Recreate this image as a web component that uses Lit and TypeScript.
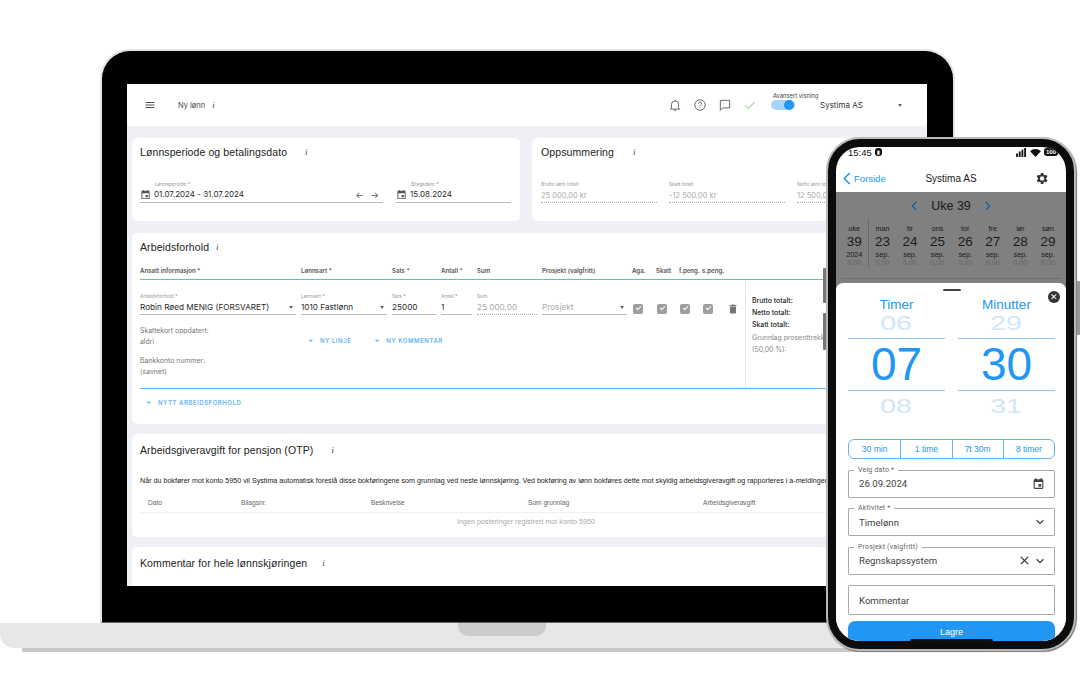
import { LitElement, html, css } from "lit";
import { customElement } from "lit/decorators.js";

const ic = (d: string, cls = "") => html`<svg class="ic ${cls}" viewBox="0 0 24 24"><path d="${d}"></path></svg>`;
const CAL = "M19 4h-1V2h-2v2H8V2H6v2H5a2 2 0 0 0-2 2v14a2 2 0 0 0 2 2h14a2 2 0 0 0 2-2V6a2 2 0 0 0-2-2zm0 16H5V9h14v11zM12 13h5v5h-5z";
const info = html`<i class="info">i</i>`;
const plus = html`<span class="plus">+</span>`;

@customElement("app-root")
export class AppRoot extends LitElement {
  static styles = css`
    :host { display: block; width: 1080px; height: 700px; position: relative; overflow: hidden; background: #fff; font-family: Inter, "Liberation Sans", sans-serif; color: #2b2b2b; }
    .laptop { position: absolute; left: 100px; top: 49px; width: 855px; height: 574px; box-sizing: border-box; background: #000; border: 2px solid #e4e4e4; border-bottom: 1px solid #666; border-radius: 30px 30px 0 0; padding: 33px 26px 36px 25px; }
    .base { position: absolute; left: 0; top: 623px; width: 1000px; height: 25px; background: #e7e7e7; border-radius: 0 0 0 14px; }
    .shadow { position: absolute; left: 22px; top: 648px; width: 960px; height: 4px; background: #c8c8c8; }
    .notch { position: absolute; left: 458px; top: 623px; width: 88px; height: 13px; background: #cbcbcb; border-radius: 0 0 10px 10px; }
    .screen { height: 100%; background: #eef0f6; overflow: hidden; display: flex; flex-direction: column; gap: 12px; }
    .ic { width: 14px; height: 14px; fill: #555; flex: none; display: block; }
    .info { font: italic 9px "Liberation Serif", serif; color: #444; }
    .top { background: #fff; height: 42px; flex: none; display: flex; align-items: center; padding: 0 17px; border-radius: 0 0 4px 4px; font-size: 7.5px; }
    .top .ham { width: 12px; height: 12px; margin-right: 22px; }
    .top .name { margin-right: 7px; color: #444; }
    .top .sp { flex: 1; }
    .top .icons { display: flex; gap: 11px; align-items: center; margin-right: 14px; }
    .top .stroke { width: 14px; height: 14px; fill: none; stroke: #555; stroke-width: 1.5; }
    .top .ok { stroke: #66bb6a; }
    .toggle-wrap { position: relative; width: 24px; height: 10px; background: #a9d5fb; border-radius: 6px; margin-right: 25px; }
    .toggle-wrap b { position: absolute; right: 1px; top: 0; width: 10px; height: 10px; border-radius: 50%; background: #2196f3; }
    .toggle-wrap span { position: absolute; left: 2px; top: -8px; font-size: 5.8px; white-space: nowrap; font-weight: 400; color: #444; }
    .co { font-size: 8px; width: 78px; color: #333; }
    .caret { width: 0; height: 0; border: 2.5px solid transparent; border-top: 3px solid #666; border-bottom: 0; flex: none; }
    .top .caret { margin-right: 8px; }
    .main { display: flex; flex-direction: column; gap: 10px; padding: 0 5px; }
    .row { display: flex; gap: 12px; margin-bottom: 2px; }
    .card { background: #fff; border-radius: 5px; padding: 7px 8px; box-sizing: border-box; }
    .row .card { height: 83px; }
    .c1 { width: 388px; flex: none; }
    .c2 { flex: 1; padding-left: 9px; }
    h2 { margin: 0; font-size: 10.5px; font-weight: 500; display: flex; gap: 18px; align-items: center; height: 13px; font-family: "Liberation Sans", Inter, sans-serif; letter-spacing: .1px; color: #222; white-space: nowrap; }
    h2.g10 { gap: 7px; }
    h2.g16 { gap: 15px; }
    h2.g20 { gap: 19px; }
    .fields { display: flex; margin-top: 23px; gap: 13px; }
    .fld { border-bottom: 1px solid #bbb; height: 22px; position: relative; box-sizing: border-box; display: flex; align-items: center; gap: 3px; font-size: 8px; padding-top: 7px; white-space: nowrap; }
    .fields .fld { padding-top: 5px; }
    .w1 { width: 243px; }
    .w2 { width: 115px; }
    .lbl { position: absolute; top: 0; font-size: 4.8px; color: #999; white-space: nowrap; left: 0; line-height: 6px; }
    .lbl.in { left: 15px; }
    .fld .ic { width: 11px; height: 11px; }
    .arrows { margin-left: auto; color: #555; font-size: 9px; word-spacing: 4px; margin-right: 4px; }
    .sums { display: flex; gap: 12px; margin-top: 23px; width: 500px; }
    .sums > div { width: 116px; flex: none; height: 22px; border-bottom: 1px dotted #aaa; color: #aaa; position: relative; font-size: 7.5px; padding-top: 10px; box-sizing: border-box; white-space: nowrap; }
    .ws { height: 191px; padding: 7px 8px 0; }
    .hdr, .line { display: grid; grid-template-columns: 156px 86px 44px 31px 60px 85px 19px 18px 18px 18px 24px; column-gap: 5px; }
    .hdr { font-size: 6.1px; font-weight: 600; color: #555; margin-top: 14px; height: 12px; border-bottom: 1px solid #64b5f6; white-space: nowrap; margin-right: -100px; line-height: 7px; }
    .hdr span { display: block; }
    .body { display: flex; height: 108px; border-bottom: 1px solid #64b5f6; margin-right: -100px; }
    .left { width: 606px; flex: none; padding-top: 13px; border-right: 1px solid #e5e5e5; box-sizing: border-box; }
    .line .fld { font-size: 8.2px; }
    .line .fld .caret { margin-left: auto; margin-right: 3px; }
    .grey { color: #aaa; }
    .dot { border-bottom: 1px dotted #aaa; }
    .chk { width: 10px; height: 10px; background: #9e9e9e; border-radius: 2px; margin: 11px 0 0 1px; position: relative; }
    .chk::after { content: ""; position: absolute; left: 2.5px; top: 2px; width: 4px; height: 2px; border: solid #fff; border-width: 0 0 1px 1px; transform: rotate(-45deg); }
    .trash { width: 12px; height: 12px; margin: 10px 0 0 2px; fill: #757575; }
    .sub { display: flex; margin-top: 10px; }
    .tax { width: 168px; flex: none; font-size: 6.9px; color: #777; line-height: 11.3px; white-space: nowrap; }
    .tax p { margin: 0 0 7px; }
    .acts { display: flex; gap: 23px; padding-top: 11px; }
    .act { color: #64b5f6; font-size: 6px; font-weight: 600; letter-spacing: .55px; display: flex; gap: 6px; align-items: center; white-space: nowrap; height: 8px; }
    .plus { font-size: 8px; font-weight: 500; }
    .tot { padding: 15px 0 0 6px; font-size: 6.9px; line-height: 12.2px; font-weight: 500; color: #222; white-space: nowrap; }
    .tot .g { color: #888; font-weight: 400; }
    .new { margin: 9px 0 0 6px; }
    .otp { height: 103px; padding-top: 9px; flex: none; }
    .otp p { margin: 21px -120px 0 0; font: 7.15px "Liberation Sans", sans-serif; white-space: nowrap; color: #222; line-height: 8px; }
    .tbl { display: grid; grid-template-columns: 93px 130px 157px 175px 100px; font: 6.6px "Liberation Sans", sans-serif; color: #666; margin-top: 14px; padding: 0 8px 6px; border-bottom: 1px solid #f0f0f0; white-space: nowrap; }
    .none { text-align: center; font: 7.2px "Liberation Sans", sans-serif; color: #aaa; margin-top: 4px; width: 772px; white-space: nowrap; }
    .cm { flex: none; padding-top: 9px; height: 60px; }

    .btn { position: absolute; width: 3px; background: #777; border-radius: 1px; }
    .b1 { left: 823px; top: 268px; height: 35px; }
    .b2 { left: 823px; top: 313px; height: 37px; }
    .b3 { left: 1077px; top: 281px; height: 54px; background: #999; }
    .phone { position: absolute; left: 826px; top: 137px; width: 250px; height: 514px; box-sizing: border-box; background: #0c0c0c; border: 2px solid #b9b9b9; border-radius: 34px; padding: 8px; box-shadow: 1px 1px 1px #777; }
    .ps { height: 100%; background: #fff; border-radius: 24px; overflow: hidden; position: relative; display: flex; flex-direction: column; font-family: "Liberation Sans", Arial, sans-serif; }
    .status { height: 21px; display: flex; align-items: flex-start; padding: 1px 8px 0 12px; line-height: 10px; font-size: 9.5px; color: #111; font-weight: 500; gap: 3px; flex: none; box-sizing: border-box; }
    .status .sp { flex: 1; }
    .status .batt { background: #111; color: #fff; border-radius: 3px; font-size: 6px; line-height: 8px; padding: 0 2px; font-weight: 700; }
    .status .sim { font-size: 5px; }
    .status svg { width: 11px; height: 9px; fill: #111; flex: none; }
    .nav { height: 24px; flex: none; display: flex; align-items: center; padding: 0 17px 3px 6px; box-sizing: border-box; font-size: 10px; color: #222; justify-content: space-between; }
    .nav .back { color: #2196f3; display: flex; align-items: center; gap: 2px; width: 83px; font-size: 9.5px; }
    .nav .right { width: 72px; display: flex; justify-content: flex-end; }
    .nav svg.ch { width: 10px; height: 13px; stroke: #2196f3; fill: none; stroke-width: 1.6; }
    .nav .gear { width: 15px; height: 15px; fill: #333; }
    .dim { background: #808080; height: 96px; flex: none; color: #1a1a1a; padding-top: 6px; box-sizing: border-box; }
    .uke { display: flex; justify-content: center; align-items: center; gap: 13px; font-size: 12.5px; height: 16px; }
    .uke svg { width: 7px; height: 10px; stroke: #0f5da0; fill: none; stroke-width: 1.6; }
    .days { display: grid; grid-template-columns: repeat(8, 27.6px); padding-left: 5px; margin-top: 5px; text-align: center; }
    .day { font-size: 7.2px; line-height: 8px; height: 49px; box-sizing: border-box; padding-top: 6px; white-space: nowrap; }
    .day:first-child { border-right: 1px solid #6a6a6a; }
    .day b { display: block; font-size: 13.5px; line-height: 17px; font-weight: 400; }
    .day u { display: block; text-decoration: none; line-height: 9px; }
    .day s { display: block; text-decoration: none; color: #656565; }
    .rule { height: 1px; background: #707070; margin: 10px 5px 0; }
    .sheet { position: absolute; left: 0; right: 0; top: 136px; bottom: 0; background: #fff; border-radius: 7px 7px 0 0; padding: 0 11px 0 12px; }
    .grab { width: 18px; height: 2px; background: #444; border-radius: 1px; margin: 6px auto 0; }
    .close { position: absolute; right: 6px; top: 8px; width: 12px; height: 12px; border-radius: 50%; background: #333; color: #fff; font-size: 9px; line-height: 12px; text-align: center; }
    .pick { display: flex; gap: 13px; margin-top: 6px; }
    .col { flex: 1; text-align: center; color: #2196f3; }
    .col .t { font-size: 13.5px; line-height: 16px; }
    .col .f { font-size: 20px; line-height: 20px; color: #cfe6fb; height: 25px; }
    .col .f span { display: inline-block; transform: scaleX(1.42); }
    .col .cur { font-size: 46px; line-height: 50px; height: 51px; border-top: 1px solid #90caf9; border-bottom: 1px solid #90caf9; color: #2196f3; }
    .col .f.b { margin-top: 5px; }
    .segs { display: grid; grid-template-columns: repeat(4, 1fr); margin-top: 18px; height: 20px; border: 1px solid #64b5f6; border-radius: 6px; box-sizing: border-box; font-size: 8.5px; color: #2196f3; text-align: center; line-height: 18px; }
    .segs span + span { border-left: 1px solid #64b5f6; }
    .of { position: relative; height: 28px; border: 1px solid #aaa; border-radius: 1px; margin-top: 10.500px; display: flex; align-items: center; padding: 0 9px 0 10px; font-size: 9.6px; color: #444; justify-content: space-between; box-sizing: border-box; font-family: Roboto, "Liberation Sans", sans-serif; }
    .of.tall { height: 30px; }
    .of label { position: absolute; left: 5px; top: -5px; background: #fff; padding: 0 4px; font-size: 7px; line-height: 8px; color: #666; letter-spacing: .2px; }
    .of .ic { width: 13px; height: 13px; fill: #444; }
    .of .ends { display: flex; gap: 5px; align-items: center; }
    .of .cv { width: 10px; height: 10px; fill: none; stroke: #444; stroke-width: 1.6; display: block; }
    .of .x { width: 11px; height: 11px; fill: none; stroke: #333; stroke-width: 1.3; display: block; }
    .save { margin-top: 6px; height: 30px; background: #2196f3; color: #fff; border-radius: 7px 7px 0 0; font-size: 9px; text-align: center; line-height: 22px; }
    .home { position: absolute; left: 74px; bottom: 0; width: 83px; height: 2px; background: #111; border-radius: 2px 2px 0 0; }
  `;

  private days() {
    const d = [["man", "23"], ["tir", "24"], ["ons", "25"], ["tor", "26"], ["fre", "27"], ["lør", "28"], ["søn", "29"]];
    return html`<div class="day">uke<b>39</b><u>2024</u><s>0,00</s></div>${d.map(([a, b]) => html`<div class="day">${a}<b>${b}</b><u>sep.</u><s>0,00</s></div>`)}`;
  }

  render() {
    const chk = html`<div class="chk"></div>`;
    return html`
      <div class="base"></div><div class="notch"></div><div class="shadow"></div>
      <div class="laptop"><div class="screen">
        <div class="top">
          ${ic("M3 18h18v-2H3v2zm0-5h18v-2H3v2zm0-7v2h18V6H3z", "ham")}
          <span class="name">Ny lønn</span>${info}
          <span class="sp"></span>
          <div class="icons">
            <svg class="stroke" viewBox="0 0 24 24"><path d="M6 17V11a6 6 0 0 1 12 0v6l2 2H4zM10 21h4M12 3v2"></path></svg>
            <svg class="stroke" viewBox="0 0 24 24"><circle cx="12" cy="12" r="9"></circle><path d="M9.500 9.500a2.500 2.500 0 1 1 3.500 2.300c-.7.4-1 1-1 2M12 16v1.500"></path></svg>
            <svg class="stroke" viewBox="0 0 24 24"><path d="M4 4h16v13H8l-4 4z"></path></svg>
            <svg class="stroke ok" viewBox="0 0 24 24"><path d="M4 13l5 5L20 7"></path></svg>
          </div>
          <div class="toggle-wrap"><span>Avansert visning</span><b></b></div>
          <span class="co">Systima AS</span><span class="caret"></span>
        </div>
        <div class="main">
          <div class="row">
            <div class="card c1"><h2>Lønnsperiode og betalingsdato ${info}</h2>
              <div class="fields">
                <div class="fld w1">${ic(CAL)}01.07.2024 - 31.07.2024<span class="lbl in">Lønnsperiode *</span><span class="arrows">← →</span></div>
                <div class="fld w2">${ic(CAL)}15.08.2024<span class="lbl in">Bilagsdato *</span></div>
              </div>
            </div>
            <div class="card c2"><h2 class="g20">Oppsummering ${info}</h2>
              <div class="sums">
                <div><span class="lbl">Brutto lønn totalt</span>25 000,00 kr</div>
                <div><span class="lbl">Skatt totalt</span>-12 500,00 kr</div>
                <div><span class="lbl">Netto lønn totalt</span>12 500,00 kr</div>
              </div>
            </div>
          </div>
          <div class="card ws"><h2 class="g10">Arbeidsforhold ${info}</h2>
            <div class="hdr"><span>Ansatt informasjon *</span><span>Lønnsart *</span><span>Sats *</span><span>Antall *</span><span>Sum</span><span>Prosjekt (valgfritt)</span><span>Aga.</span><span>Skatt</span><span>f.peng.</span><span>s.peng.</span></div>
            <div class="body">
              <div class="left">
                <div class="line">
                  <div class="fld"><span class="lbl">Arbeidsforhold *</span>Robin Røed MENIG (FORSVARET)<span class="caret"></span></div>
                  <div class="fld"><span class="lbl">Lønnsart *</span>1010 Fastlønn<span class="caret"></span></div>
                  <div class="fld"><span class="lbl">Sats *</span>25000</div>
                  <div class="fld"><span class="lbl">Antall *</span>1</div>
                  <div class="fld grey dot"><span class="lbl">Sum</span>25 000,00</div>
                  <div class="fld grey">Prosjekt<span class="caret"></span></div>
                  ${chk}${chk}${chk}${chk}
                  <svg class="trash" viewBox="0 0 24 24"><path d="M6 19a2 2 0 0 0 2 2h8a2 2 0 0 0 2-2V7H6v12zM19 4h-3.500l-1-1h-5l-1 1H5v2h14V4z"></path></svg>
                </div>
                <div class="sub">
                  <div class="tax"><p>Skattekort oppdatert:<br />aldri</p><p>Bankkonto nummer:<br />(savnet)</p></div>
                  <div class="acts"><span class="act">${plus}NY LINJE</span><span class="act">${plus}NY KOMMENTAR</span></div>
                </div>
              </div>
              <div class="tot">Brutto totalt:<br />Netto totalt:<br />Skatt totalt:<br /><span class="g">Grunnlag prosenttrekk<br />(50,00 %):</span></div>
            </div>
            <div class="act new">${plus}NYTT ARBEIDSFORHOLD</div>
          </div>
          <div class="card otp"><h2>Arbeidsgiveravgift for pensjon (OTP) ${info}</h2>
            <p>Når du bokfører mot konto 5950 vil Systima automatisk foreslå disse bokføringene som grunnlag ved neste lønnskjøring. Ved bokføring av lønn bokføres dette mot skyldig arbeidsgiveravgift og rapporteres i a-meldingen.</p>
            <div class="tbl"><span>Dato</span><span>Bilagsnr.</span><span>Beskrivelse</span><span>Sum grunnlag</span><span>Arbeidsgiveravgift</span></div>
            <div class="none">Ingen posteringer registrert mot konto 5950</div>
          </div>
          <div class="card cm"><h2 class="g16">Kommentar for hele lønnskjøringen ${info}</h2></div>
        </div>
      </div></div>

      <div class="btn b1"></div><div class="btn b2"></div><div class="btn b3"></div>
      <div class="phone"><div class="ps">
        <div class="status">15:45 <span class="batt sim">▮</span><span class="sp"></span>
          <svg viewBox="0 0 12 10"><path d="M0 6h2v4H0zM3 4h2v6H3zM6 2h2v8H6zM9 0h2v10H9z"></path></svg>
          <svg viewBox="0 0 12 10"><path d="M6 10 0 3.500a8.500 8.500 0 0 1 12 0z"></path></svg>
          <span class="batt">100</span></div>
        <div class="nav"><span class="back"><svg class="ch" viewBox="0 0 10 14"><path d="M8 1 2 7l6 6"></path></svg>Forside</span><span>Systima AS</span>
          <span class="right"><svg class="gear" viewBox="0 0 24 24"><path d="M19.400 13a7.600 7.600 0 0 0 0-2l2.100-1.600-2-3.500-2.500 1a7.300 7.300 0 0 0-1.700-1L15 3.300h-4l-.4 2.600a7.300 7.300 0 0 0-1.700 1l-2.500-1-2 3.500L6.500 11a7.600 7.600 0 0 0 0 2l-2.100 1.600 2 3.500 2.500-1a7.300 7.300 0 0 0 1.700 1l.4 2.600h4l.4-2.600a7.300 7.300 0 0 0 1.700-1l2.500 1 2-3.500zM13 15.500a3.500 3.500 0 1 1 0-7 3.500 3.500 0 0 1 0 7z"></path></svg></span></div>
        <div class="dim">
          <div class="uke"><svg viewBox="0 0 8 12"><path d="M6 1 1.500 6 6 11"></path></svg><span>Uke 39</span><svg viewBox="0 0 8 12"><path d="M2 1l4.500 5L2 11"></path></svg></div>
          <div class="days">${this.days()}</div>
          <div class="rule"></div>
        </div>
        <div class="sheet">
          <div class="grab"></div><div class="close">✕</div>
          <div class="pick">
            <div class="col"><div class="t">Timer</div><div class="f"><span>06</span></div><div class="cur">07</div><div class="f b"><span>08</span></div></div>
            <div class="col"><div class="t">Minutter</div><div class="f"><span>29</span></div><div class="cur">30</div><div class="f b"><span>31</span></div></div>
          </div>
          <div class="segs"><span>30 min</span><span>1 time</span><span>7t 30m</span><span>8 timer</span></div>
          <div class="of"><label>Velg dato *</label>26.09.2024 ${ic(CAL)}</div>
          <div class="of"><label>Aktivitet *</label>Timelønn <svg class="cv" viewBox="0 0 12 12"><path d="M2 4l4 4 4-4"></path></svg></div>
          <div class="of"><label>Prosjekt (valgfritt)</label>Regnskapssystem <span class="ends"><svg class="x" viewBox="0 0 12 12"><path d="M2 2l8 8M10 2l-8 8"></path></svg><svg class="cv" viewBox="0 0 12 12"><path d="M2 4l4 4 4-4"></path></svg></span></div>
          <div class="of tall">Kommentar</div>
          <div class="save">Lagre</div>
        </div>
        <div class="home"></div>
      </div></div>
    `;
  }
}
